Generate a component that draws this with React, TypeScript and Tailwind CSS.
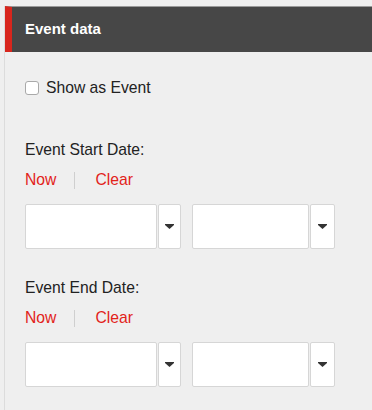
import React from 'react';

const Caret = () => (
  <svg width="9" height="5" viewBox="0 0 9 5" className="block">
    <path d="M0 0h9v1L4.5 5 0 1z" fill="#333" />
  </svg>
);

const DateTimeInput = ({ dateWidth, btnWidth }: { dateWidth: string; btnWidth: string }) => (
  <div className="flex">
    <input
      type="text"
      className={`${dateWidth} h-[45px] bg-white border border-[#d6d6d6] rounded-[2px] outline-none`}
    />
    <button
      type="button"
      className={`${btnWidth} h-[45px] ml-[1px] bg-white border border-[#d6d6d6] rounded-[2px] flex items-center justify-center`}
    >
      <Caret />
    </button>
  </div>
);

const DateField = ({ label }: { label: string }) => (
  <div>
    <div className="h-[18px] leading-[18px] text-[15.7px] text-[#222]">{label}</div>
    <div className="mt-[12px] flex items-center h-[18px] leading-[18px] text-[15.7px] text-[#e2231a]">
      <a className="cursor-pointer">Now</a>
      <span className="ml-[18px] mr-[20px] h-[17px] border-l border-[#cfcfcf]" />
      <a className="cursor-pointer">Clear</a>
    </div>
    <div className="mt-[15px] flex gap-[11px]">
      <DateTimeInput dateWidth="w-[132px]" btnWidth="w-[23px]" />
      <DateTimeInput dateWidth="w-[117px]" btnWidth="w-[25px]" />
    </div>
  </div>
);

export default function App() {
  return (
    <div className="w-[372px] h-[410px] overflow-hidden bg-[#efefef] pt-[6px] pl-[4px] font-['Liberation_Sans',Arial,sans-serif]">
      <div className="h-full border-l border-[#dcdcdc]">
        <div className="h-[46px] flex items-center bg-[#474747] border-t border-t-[#9a9a9a] border-l-[7px] border-l-[#d8261d] pl-[13px]">
          <h2 className="text-white font-bold text-[15px]">Event data</h2>
        </div>

        <div className="pl-[20px] pt-[27px]">
          <label className="flex items-center h-[18px] text-[15.7px] text-[#222]">
            <input
              type="checkbox"
              className="appearance-none w-[14px] h-[14px] bg-white border border-[#a9a9a9] rounded-[3px]"
            />
            <span className="ml-[7px]">Show as Event</span>
          </label>

          <div className="mt-[44px]">
            <DateField label="Event Start Date:" />
          </div>

          <div className="mt-[30px]">
            <DateField label="Event End Date:" />
          </div>
        </div>
      </div>
    </div>
  );
}
